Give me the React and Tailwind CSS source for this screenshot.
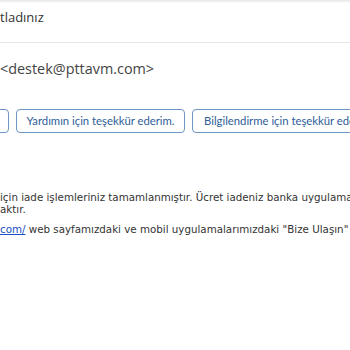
export default function App() {
  return (
    <div className="w-[350px] h-[350px] overflow-hidden bg-white relative">
      <div className="h-[3px] bg-gradient-to-b from-[#e6e6e6] to-white" />
      <div className="h-[40px] border-b border-[#e6e6e6] pt-[6px] whitespace-nowrap text-[13px] leading-[16px] text-[#333]" style={{ fontFamily: '"Open Sans", sans-serif' }}>
        tladınız
      </div>
      <div className="mt-[16px] whitespace-nowrap text-[14.4px] leading-[20px] text-[#444]" style={{ fontFamily: '"Open Sans", sans-serif' }}>
        &lt;destek@pttavm.com&gt;
      </div>
      <div className="mt-[30px] flex gap-[7px] ml-[-99px] whitespace-nowrap" style={{ fontFamily: 'Lato, sans-serif' }}>
        <button className="h-[24px] px-[10px] rounded-[4px] border border-[#6f95c7] text-[11.3px] text-[#2e5d99] bg-white shrink-0 w-[108px]">Teşekkürler.</button>
        <button className="h-[24px] w-[169px] px-[8px] rounded-[4px] border border-[#6f95c7] text-[11.3px] text-[#2e5d99] bg-white shrink-0">Yardımın için teşekkür ederim.</button>
        <button className="h-[24px] px-[11px] rounded-[4px] border border-[#6f95c7] text-[11.3px] text-[#2e5d99] bg-white shrink-0">Bilgilendirme için teşekkür ederim.</button>
      </div>
      <div className="mt-[58px] whitespace-nowrap text-[10.3px] leading-[12px] text-[#333]" style={{ fontFamily: '"DejaVu Sans", Verdana, sans-serif' }}>
        <div>için iade işlemleriniz tamamlanmıştır. Ücret iadeniz banka uygulamalarına göre</div>
        <div>aktır.</div>
        <div className="mt-[8px]">
          <a className="text-[#1a4fc4] underline">com/</a> web sayfamızdaki ve mobil uygulamalarımızdaki "Bize Ulaşın" bölümünden
        </div>
      </div>
    </div>
  );
}
